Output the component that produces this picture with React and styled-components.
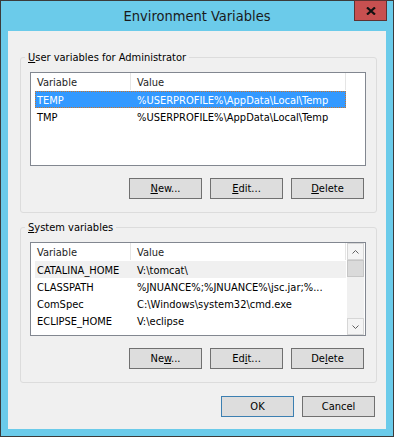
import React from "react";
import styled, { createGlobalStyle } from "styled-components";

const GlobalStyle = createGlobalStyle`
  html, body {
    margin: 0;
    padding: 0;
    background: #ffffff;
  }
  body {
    font-family: "DejaVu Sans Condensed", "Liberation Sans", sans-serif;
    font-size: 11px;
    color: #000;
  }
`;

const Window = styled.div`
  position: relative;
  box-sizing: border-box;
  width: 394px;
  height: 437px;
  border: 1px solid #3b3b3b;
  background: #6bcbea;
  padding: 0 7px 7px;
  display: flex;
  flex-direction: column;
`;

const TitleBar = styled.div`
  height: 30px;
  display: flex;
  align-items: center;
  justify-content: center;
  font-size: 14.5px;
  color: #1a1a1a;
  padding-bottom: 1px;
  box-sizing: border-box;
`;

const CloseButton = styled.div`
  position: absolute;
  top: -1px;
  right: 6px;
  width: 33px;
  height: 21px;
  box-sizing: border-box;
  background: #c75050;
  border: 1px solid #5e3232;
  display: flex;
  align-items: center;
  justify-content: center;
`;

const Client = styled.div`
  flex: 1;
  background: #f0f0f0;
  padding: 19px 9px 12px 12px;
  display: flex;
  flex-direction: column;
`;

const GroupBox = styled.fieldset`
  margin: 0 0 ${(p) => p.gap || 0}px;
  padding: 7px 10px ${(p) => p.bottom}px 9px;
  border: 1px solid #dcdcdc;
  border-radius: 3px;
  min-width: 0;
  height: 163px;
  box-sizing: border-box;
`;

const Legend = styled.legend`
  padding: 0 3px;
  margin-left: -5px;
  line-height: 15px;
  font-size: 11px;
  color: #000;
`;

const ListView = styled.div`
  height: 94px;
  box-sizing: border-box;
  border: 1px solid #828790;
  background: #fff;
  display: flex;
  overflow: hidden;
`;

const ListBody = styled.div`
  flex: 1;
  display: flex;
  flex-direction: column;
  min-width: 0;
`;

const Header = styled.div`
  display: flex;
  height: 17px;
  margin-bottom: 1px;
  flex-shrink: 0;
`;

const HeaderCell = styled.div`
  width: ${(p) => p.w}px;
  box-sizing: border-box;
  padding: 1px 0 0 6px;
  border-right: 1px solid #e5e5e5;
  display: flex;
  align-items: center;
  color: #1e1e1e;
`;

const HeaderFiller = styled.div`
  flex: 1;
`;

const Row = styled.div`
  display: flex;
  height: 17px;
  width: 311px;
  margin-left: 4px;
  box-sizing: border-box;
  align-items: center;
  padding-top: 1px;
  white-space: nowrap;
  background: ${(p) =>
    p.state === "selected" ? "#3399ff" : p.state === "inactive" ? "#f0f0f0" : "transparent"};
  color: ${(p) => (p.state === "selected" ? "#fff" : "#000")};
  outline: ${(p) => (p.state === "selected" ? "1px dotted #c8742c" : "none")};
  outline-offset: -1px;
`;

const Cell = styled.div`
  width: ${(p) => p.w}px;
  box-sizing: border-box;
  padding-left: ${(p) => p.pad}px;
  overflow: hidden;
  text-overflow: ellipsis;
`;

const ScrollBar = styled.div`
  width: 17px;
  margin-right: 1px;
  background: #f0f0f0;
  display: flex;
  flex-direction: column;
`;

const ScrollArrow = styled.div`
  height: 17px;
  box-sizing: border-box;
  border: 1px solid #d6d6d6;
  background: #f4f4f4;
  display: flex;
  align-items: center;
  justify-content: center;
`;

const ScrollThumb = styled.div`
  height: 17px;
  box-sizing: border-box;
  border: 1px solid #c6c6c6;
  background: #dadada;
`;

const ScrollTrack = styled.div`
  flex: 1;
`;

const ButtonRow = styled.div`
  display: flex;
  justify-content: flex-end;
  gap: 8px;
  margin-top: ${(p) => p.top}px;
  padding-right: ${(p) => p.right || 0}px;
`;

const Button = styled.div`
  width: 73px;
  height: 21px;
  box-sizing: border-box;
  border: 1px solid ${(p) => (p.primary ? "#3c7fb1" : "#707070")};
  background: #dddddd;
  display: flex;
  align-items: center;
  justify-content: center;
  color: #000;
  padding-bottom: 1px;
`;

const Chevron = ({ up }) => (
  <svg width="7" height="4" viewBox="0 0 7 4">
    <path
      d={up ? "M0.5 3.5 L3.5 0.5 L6.5 3.5" : "M0.5 0.5 L3.5 3.5 L6.5 0.5"}
      fill="none"
      stroke="#606060"
      strokeWidth="1"
    />
  </svg>
);

const userVars = [
  { name: "TEMP", value: "%USERPROFILE%\\AppData\\Local\\Temp", state: "selected" },
  { name: "TMP", value: "%USERPROFILE%\\AppData\\Local\\Temp" },
];

const systemVars = [
  { name: "CATALINA_HOME", value: "V:\\tomcat\\", state: "inactive" },
  { name: "CLASSPATH", value: "%JNUANCE%;%JNUANCE%\\jsc.jar;%..." },
  { name: "ComSpec", value: "C:\\Windows\\system32\\cmd.exe" },
  { name: "ECLIPSE_HOME", value: "V:\\eclipse" },
];

const VarList = ({ items, scroll }) => (
  <ListView>
    <ListBody>
      <Header>
        <HeaderCell w={100}>Variable</HeaderCell>
        <HeaderCell w={215}>Value</HeaderCell>
        <HeaderFiller />
      </Header>
      {items.map((v) => (
        <Row key={v.name} state={v.state}>
          <Cell w={96} pad={2}>{v.name}</Cell>
          <Cell w={215} pad={6}>{v.value}</Cell>
        </Row>
      ))}
    </ListBody>
    {scroll && (
      <ScrollBar>
        <ScrollArrow><Chevron up /></ScrollArrow>
        <ScrollThumb />
        <ScrollTrack />
        <ScrollArrow><Chevron /></ScrollArrow>
      </ScrollBar>
    )}
  </ListView>
);

export default function App() {
  return (
    <>
      <GlobalStyle />
      <Window>
        <TitleBar>Environment Variables</TitleBar>
        <CloseButton>
          <svg width="10" height="8" viewBox="0 0 10 8">
            <path d="M1 0.5 L9 7.5 M9 0.5 L1 7.5" stroke="#111" strokeWidth="2.2" />
          </svg>
        </CloseButton>
        <Client>
          <GroupBox bottom={13} gap={7}>
            <Legend><u>U</u>ser variables for Administrator</Legend>
            <VarList items={userVars} />
            <ButtonRow top={12} right={2}>
              <Button><span><u>N</u>ew...</span></Button>
              <Button><span><u>E</u>dit...</span></Button>
              <Button><span><u>D</u>elete</span></Button>
            </ButtonRow>
          </GroupBox>
          <GroupBox bottom={14} gap={13}>
            <Legend><u>S</u>ystem variables</Legend>
            <VarList items={systemVars} scroll />
            <ButtonRow top={12} right={2}>
              <Button><span>Ne<u>w</u>...</span></Button>
              <Button><span>Ed<u>i</u>t...</span></Button>
              <Button><span>De<u>l</u>ete</span></Button>
            </ButtonRow>
          </GroupBox>
          <ButtonRow top={0} right={2}>
            <Button primary>OK</Button>
            <Button>Cancel</Button>
          </ButtonRow>
        </Client>
      </Window>
    </>
  );
}
